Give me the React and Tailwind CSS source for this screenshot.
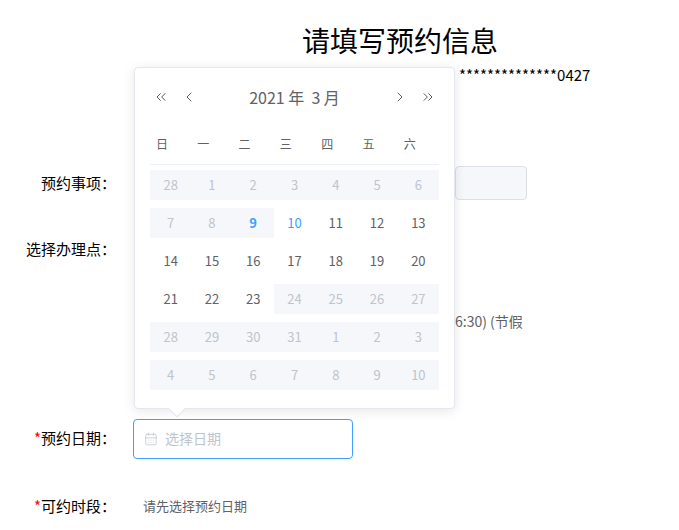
import { ChevronLeft, ChevronRight, ChevronsLeft, ChevronsRight, CalendarDays } from "lucide-react";

const font = { fontFamily: '"Microsoft YaHei", "Noto Sans CJK SC", sans-serif' };

const rows = [
  [["28", 0], ["1", 0], ["2", 0], ["3", 0], ["4", 0], ["5", 0], ["6", 0]],
  [["7", 0], ["8", 0], ["9", 2], ["10", 3], ["11", 1], ["12", 1], ["13", 1]],
  [["14", 1], ["15", 1], ["16", 1], ["17", 1], ["18", 1], ["19", 1], ["20", 1]],
  [["21", 1], ["22", 1], ["23", 1], ["24", 0], ["25", 0], ["26", 0], ["27", 0]],
  [["28", 0], ["29", 0], ["30", 0], ["31", 0], ["1", 0], ["2", 0], ["3", 0]],
  [["4", 0], ["5", 0], ["6", 0], ["7", 0], ["8", 0], ["9", 0], ["10", 0]],
];

function Cell({ label, kind }) {
  let cls = "text-[#c0c4cc] bg-[#f5f7fa]";
  if (kind === 1) cls = "text-[#606266]";
  if (kind === 2) cls = "text-[#409eff] font-bold bg-[#f5f7fa]";
  if (kind === 3) cls = "text-[#409eff]";
  return <div className={`h-[30px] flex items-center justify-center text-[13px] ${cls}`}>{label}</div>;
}

function Calendar() {
  return (
    <div className="absolute left-[134px] top-[67px] w-[321px] h-[342px] bg-white border border-[#e4e7ed] rounded shadow-[0_2px_12px_rgba(0,0,0,0.1)] px-[15px]">
      <div className="flex items-center h-[56px] pt-[2px] text-[#303133]">
        <ChevronsLeft size={16} strokeWidth={1.2} className="ml-[3px]" />
        <ChevronLeft size={16} strokeWidth={1.2} className="ml-[12px]" />
        <div className="flex-1 text-center text-[16px] text-[#606266]">2021 年&nbsp; 3 月</div>
        <ChevronRight size={16} strokeWidth={1.2} className="mr-[12px]" />
        <ChevronsRight size={16} strokeWidth={1.2} className="mr-[3px]" />
      </div>
      <div className="grid grid-cols-7 h-[41px] items-center border-b border-[#ebeef5] text-[12px] text-[#606266] mb-[1px]">
        {["日", "一", "二", "三", "四", "五", "六"].map((d) => (
          <div key={d} className="pl-[6px]">{d}</div>
        ))}
      </div>
      {rows.map((r, i) => (
        <div key={i} className="grid grid-cols-7 py-[4px]">
          {r.map(([l, k], j) => <Cell key={j} label={l} kind={k} />)}
        </div>
      ))}
      <div className="absolute left-[36px] -bottom-[7px] w-[12px] h-[12px] bg-white border-r border-b border-[#e4e7ed] rotate-45" />
    </div>
  );
}

export default function App() {
  return (
    <div className="relative w-[679px] h-[530px] bg-white text-[15px] text-black overflow-hidden" style={font}>
      <div className="pt-[20px] pl-[302px] text-[28px] leading-[40px]">请填写预约信息</div>
      <div className="pl-[459px] mt-[5px] text-[15px] leading-[20px]">**************0427</div>
      <div className="flex items-center mt-[81px] h-[34px]">
        <div className="w-[116px] text-right">预约事项：</div>
        <div className="ml-[339px] w-[72px] h-[34px] bg-[#f5f7fa] border border-[#dcdfe6] rounded" />
      </div>
      <div className="flex mt-[38px]">
        <div className="w-[116px] text-right">选择办理点：</div>
      </div>
      <div className="pl-[455px] mt-[50px] text-[#606266] text-[14px]">6:30) (节假</div>
      <div className="flex items-center mt-[87px]">
        <div className="w-[116px] text-right"><span className="text-[#ff0000]">*</span>预约日期：</div>
        <div className="ml-[17px] w-[220px] h-[40px] border border-[#409eff] rounded flex items-center pl-[10px] text-[#c0c4cc]">
          <CalendarDays size={14} strokeWidth={1.3} className="mr-[7px]" />
          <span className="text-[14px]">选择日期</span>
        </div>
      </div>
      <div className="flex items-center mt-[36px]">
        <div className="w-[116px] text-right"><span className="text-[#ff0000]">*</span>可约时段：</div>
        <div className="ml-[27px] text-[13px] text-[#606266]">请先选择预约日期</div>
      </div>
      <Calendar />
    </div>
  );
}
